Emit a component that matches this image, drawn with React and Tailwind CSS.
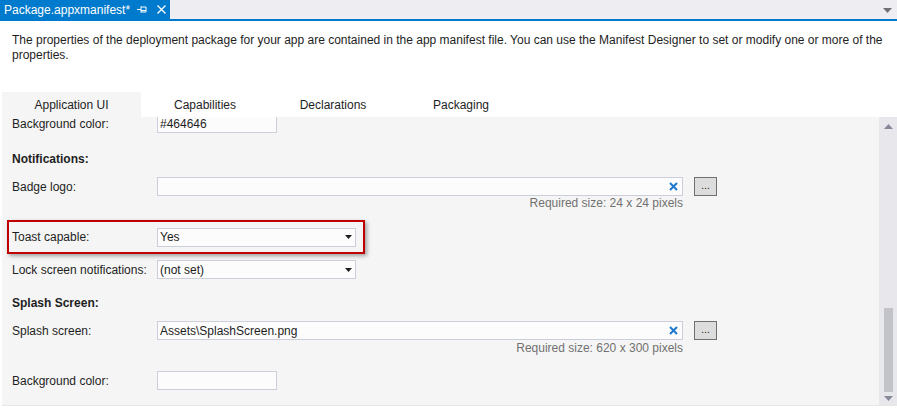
import React from 'react';

const font = { fontFamily: '"Segoe UI", "Liberation Sans", Arial, sans-serif' };

const Caret = ({ up, className }) => (
  <svg width="9" height="5" viewBox="0 0 9 5" className={className}>
    <path d={up ? 'M0 5 L4.5 0 L9 5 Z' : 'M0 0 L9 0 L4.5 5 Z'} fill="currentColor" />
  </svg>
);

const TextBox = ({ value = '', width = 'w-[120px]' }) => (
  <div className={`${width} h-[19px] bg-[#fcfcfc] border border-[#cccedb] flex items-center px-[2px] text-[#1e1e1e]`}>
    {value}
  </div>
);

const Select = ({ value }) => (
  <div className="w-[199px] h-[19px] bg-[#fcfcfc] border border-[#cccedb] flex items-center justify-between pl-[2px] pr-[3px] text-[#1e1e1e]">
    <span>{value}</span>
    <svg width="7" height="4" viewBox="0 0 7 4"><path d="M0 0 L7 0 L3.5 4 Z" fill="#1e1e1e" /></svg>
  </div>
);

const FileBox = ({ value = '' }) => (
  <div className="flex items-center">
    <div className="w-[526px] h-[19px] bg-[#fcfcfc] border border-[#cccedb] flex items-center justify-between pl-[2px] pr-[4px] text-[#1e1e1e]">
      <span>{value}</span>
      <svg width="9" height="9" viewBox="0 0 9 9">
        <path d="M1 1 L8 8 M8 1 L1 8" stroke="#1c79d0" strokeWidth="2" />
      </svg>
    </div>
    <button className="ml-[11px] w-[23px] h-[19px] bg-[#dddddd] border border-[#707070] flex items-center justify-center leading-none text-[11px] text-[#1e1e1e] pb-[3px]">
      ...
    </button>
  </div>
);

const Row = ({ label, children, className = '' }) => (
  <div className={`flex items-center h-[19px] ${className}`}>
    <div className="w-[155px] pl-[10px] text-[#1e1e1e]">{label}</div>
    {children}
  </div>
);

const Hint = ({ children, className = '' }) => (
  <div className={`w-[681px] text-right text-[#717171] h-[14px] leading-[14px] ${className}`}>{children}</div>
);

export default function App() {
  return (
    <div className="w-[897px] h-[408px] bg-white text-[12px] overflow-hidden" style={font}>
      {/* document tab strip */}
      <div className="h-[19px] bg-[#eeeef2] flex items-center justify-between">
        <div className="h-full w-[170px] bg-[#007acc] text-white flex items-center pl-[4px] gap-[7px]">
          <span>Package.appxmanifest*</span>
          <svg width="10" height="9" viewBox="0 0 10 9">
            <path d="M0 4.5 H4 M4 1.5 V7.5 M4 2 H9 V7 H4 M4 5.5 H9" stroke="white" strokeWidth="1" fill="none" />
          </svg>
          <svg width="9" height="9" viewBox="0 0 9 9" className="ml-[3px]">
            <path d="M0.5 0.5 L8.5 8.5 M8.5 0.5 L0.5 8.5" stroke="white" strokeWidth="1.3" />
          </svg>
        </div>
        <Caret className="text-[#717171] mr-[5px] mt-[2px]" />
      </div>
      <div className="h-[2px] bg-[#007acc]" />

      <div className="pl-[12px] pr-[14px] pt-[12px] leading-[15px] text-[#1e1e1e] h-[71px]">
        The properties of the deployment package for your app are contained in the app manifest file. You can use the Manifest Designer to set or modify one or more of the properties.
      </div>

      {/* designer tabs */}
      <div className="flex h-[25px] pl-[2px] text-[#1e1e1e]">
        <div className="w-[139px] bg-[#f5f5f5] flex items-center justify-center">Application UI</div>
        <div className="w-[128px] flex items-center justify-center">Capabilities</div>
        <div className="w-[128px] flex items-center justify-center">Declarations</div>
        <div className="w-[128px] flex items-center justify-center">Packaging</div>
      </div>

      <div className="flex ml-[2px] h-[289px] border-b border-[#e6e6e6]">
        <div className="flex-1 bg-[#f5f5f5] overflow-hidden">
          <Row label="Background color:" className="-mt-[3px]">
            <TextBox value="#464646" />
          </Row>
          <div className="mt-[17px] h-[16px] pl-[10px] font-bold text-[#1e1e1e]">Notifications:</div>
          <Row label="Badge logo:" className="mt-[11px]">
            <FileBox />
          </Row>
          <Hint>Required size: 24 x 24 pixels</Hint>
          <div className="mt-[10px] ml-[5px] w-[358px] h-[34px] border-2 border-[#c00000] shadow-[2px_2px_4px_rgba(0,0,0,0.35)] flex items-center">
            <div className="w-[148px] pl-[3px] text-[#1e1e1e]">Toast capable:</div>
            <Select value="Yes" />
          </div>
          <Row label="Lock screen notifications:" className="mt-[6px]">
            <Select value="(not set)" />
          </Row>
          <div className="mt-[15px] h-[16px] pl-[10px] font-bold text-[#1e1e1e]">Splash Screen:</div>
          <Row label="Splash screen:" className="mt-[11px]">
            <FileBox value="Assets\SplashScreen.png" />
          </Row>
          <Hint className="mt-[1px]">Required size: 620 x 300 pixels</Hint>
          <Row label="Background color:" className="mt-[16px]">
            <TextBox />
          </Row>
        </div>
        {/* vertical scrollbar */}
        <div className="w-[18px] bg-[#e8e8ec] flex flex-col items-center pt-[7px] pb-[4px] text-[#868999]">
          <Caret up />
          <div className="flex-1" />
          <div className="w-[9px] h-[84px] bg-[#c2c3c9] mb-[4px]" />
          <Caret />
        </div>
      </div>
    </div>
  );
}
